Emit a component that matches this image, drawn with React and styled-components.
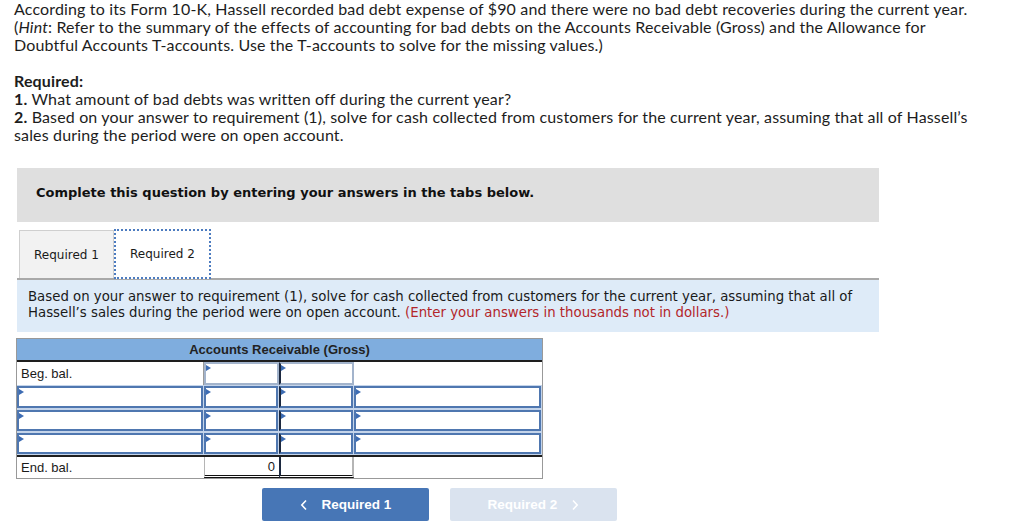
import React from 'react';
import styled, { createGlobalStyle } from 'styled-components';

const GlobalStyle = createGlobalStyle`
  html, body {
    margin: 0;
    padding: 0;
    background: #fff;
  }
  body {
    font-family: "Lato", "Open Sans", sans-serif;
    color: #1d1d1d;
  }
`;

const Page = styled.div`
  width: 1024px;
  padding-bottom: 10px;
`;

const Intro = styled.div`
  padding-left: 14px;
  width: 965px;
  font-family: "Lato", "Open Sans", sans-serif;
  font-size: 16px;
  letter-spacing: 0.15px;
  line-height: 18px;
  color: #1d1d1d;

  p {
    margin: 0 0 18px;
  }
  p:last-child {
    margin-bottom: 0;
  }
  b {
    font-weight: 700;
  }
`;

const Question = styled.section`
  margin: 24px 0 0 17px;
  width: 862px;
  font-family: Verdana, "DejaVu Sans", sans-serif;
`;

const Banner = styled.div`
  box-sizing: border-box;
  height: 54px;
  background: #dfdfdf;
  display: flex;
  align-items: center;
  padding: 0 0 5px 19px;
  font-size: 13px;
  font-weight: 700;
  color: #111;
`;

const Tabs = styled.div`
  display: flex;
  align-items: flex-end;
  margin-top: 6px;
  padding-left: 2px;
  height: 50px;
`;

const Tab = styled.div`
  box-sizing: border-box;
  display: flex;
  align-items: center;
  justify-content: center;
  font-size: 12px;
  color: #1a1a1a;
  ${(p) =>
    p.$active
      ? `
    width: 97px;
    height: 50px;
    background: #fff;
    border: 2px dotted #4d7cc0;
    margin-bottom: -1px;
    position: relative;
    z-index: 1;
  `
      : `
    width: 95px;
    height: 48px;
    background: #f2f2f2;
    border: 1px solid #cfcfcf;
    border-bottom: none;
  `}
`;

const Prompt = styled.div`
  border-top: 2px solid #a9a9a9;
  background: #deebf8;
  padding: 9px 11px 0;
  height: 43px;
  font-size: 13.3px;
  line-height: 16px;
  color: #1a1a1a;
`;

const Hint = styled.span`
  color: #b3262a;
`;

const TAccount = styled.div`
  margin: 6px 0 0 -1px;
  width: 525px;
  border: 1px solid #999;
  font-family: "Liberation Sans", Arial, sans-serif;
  font-size: 13px;
  color: #1a1a1a;
`;

const Header = styled.div`
  box-sizing: border-box;
  height: 23px;
  background: #7fadde;
  border-bottom: 2px solid #1e1e1e;
  display: flex;
  align-items: center;
  justify-content: center;
  font-weight: 700;
  color: #222;
`;

const Row = styled.div`
  box-sizing: border-box;
  display: grid;
  grid-template-columns: 187px 75px 75px 1fr;
  height: ${(p) => p.$h || 23}px;
  background: ${(p) => (p.$input ? '#c4d4ea' : '#fff')};
  ${(p) => p.$total && 'border-top: 2px solid #1e1e1e;'}
`;

const Cell = styled.div`
  box-sizing: border-box;
  position: relative;
  display: flex;
  align-items: center;
  padding: 0 4px;
  background: #fff;
  justify-content: ${(p) => (p.$right ? 'flex-end' : 'flex-start')};
  ${(p) => p.$divider && 'border-right: 1px solid #9a9a9a;'}
`;

const InputCell = styled(Cell)`
  border: 2px solid ${(p) => (p.$soft ? '#a3b4cc' : '#4f77b0')};
  ${(p) => !p.$soft && 'margin: 1px 1px 1px 0;'}
  ${(p) => p.$split && 'border-left: 2px solid #1c2940;'}

  &::before {
    content: '';
    position: absolute;
    left: 0;
    top: 1px;
    border-top: 3px solid transparent;
    border-bottom: 3px solid transparent;
    border-left: 5px solid #3d6cb3;
  }
`;

const TotalCell = styled(Cell)`
  border-left: ${(p) => (p.$split ? '2px solid #1c2940' : '1px solid #b5b5b5')};
  border-right: ${(p) => (p.$last ? '2px solid #b5b5b5' : 'none')};
  border-bottom: 3px double #111;
`;

const Nav = styled.div`
  width: 879px;
  margin-left: -17px;
  display: flex;
  justify-content: center;
  gap: 21px;
  margin-top: 9px;
`;

const NavButton = styled.button`
  width: 167px;
  height: 33px;
  border: none;
  border-radius: 2px;
  display: flex;
  align-items: center;
  justify-content: center;
  gap: 14px;
  font-family: "Liberation Sans", Arial, sans-serif;
  font-size: 13.5px;
  font-weight: 700;
  color: #fff;
  background: ${(p) => (p.disabled ? '#dae3ef' : '#4776b6')};
  cursor: ${(p) => (p.disabled ? 'default' : 'pointer')};
`;

const Chevron = ({ dir }) => (
  <svg width="8" height="12" viewBox="0 0 8 12" fill="none">
    <path
      d={dir === 'left' ? 'M6 1.5 1.8 6 6 10.5' : 'M2 1.5 6.2 6 2 10.5'}
      stroke="currentColor"
      strokeWidth="1.6"
    />
  </svg>
);

const inputRows = [24, 23, 23];

export default function App() {
  return (
    <Page>
      <GlobalStyle />
      <Intro>
        <p>
          According to its Form 10-K, Hassell recorded bad debt expense of $90 and there were no bad debt
          recoveries during the current year. (<i>Hint</i>: Refer to the summary of the effects of accounting
          for bad debts on the Accounts Receivable (Gross) and the Allowance for Doubtful Accounts
          T-accounts. Use the T-accounts to solve for the missing values.)
        </p>
        <p>
          <b>Required:</b>
          <br />
          <b>1.</b> What amount of bad debts was written off during the current year?
          <br />
          <b>2.</b> Based on your answer to requirement (1), solve for cash collected from customers for the
          current year, assuming that all of Hassell’s sales during the period were on open account.
        </p>
      </Intro>

      <Question>
        <Banner>Complete this question by entering your answers in the tabs below.</Banner>

        <Tabs>
          <Tab>Required 1</Tab>
          <Tab $active>Required 2</Tab>
        </Tabs>

        <Prompt>
          Based on your answer to requirement (1), solve for cash collected from customers for the current
          year, assuming that all of Hassell’s sales during the period were on open account.{' '}
          <Hint>(Enter your answers in thousands not in dollars.)</Hint>
        </Prompt>

        <TAccount>
          <Header>Accounts Receivable (Gross)</Header>
          <Row>
            <Cell $divider>Beg. bal.</Cell>
            <InputCell $soft />
            <InputCell $soft $split />
            <Cell />
          </Row>
          {inputRows.map((h, i) => (
            <Row key={i} $input $h={h}>
              <InputCell />
              <InputCell />
              <InputCell $split />
              <InputCell />
            </Row>
          ))}
          <Row $total>
            <Cell>End. bal.</Cell>
            <TotalCell $right>0</TotalCell>
            <TotalCell $split $last />
            <Cell />
          </Row>
        </TAccount>

        <Nav>
          <NavButton>
            <Chevron dir="left" />
            Required 1
          </NavButton>
          <NavButton disabled>
            Required 2
            <Chevron dir="right" />
          </NavButton>
        </Nav>
      </Question>
    </Page>
  );
}
